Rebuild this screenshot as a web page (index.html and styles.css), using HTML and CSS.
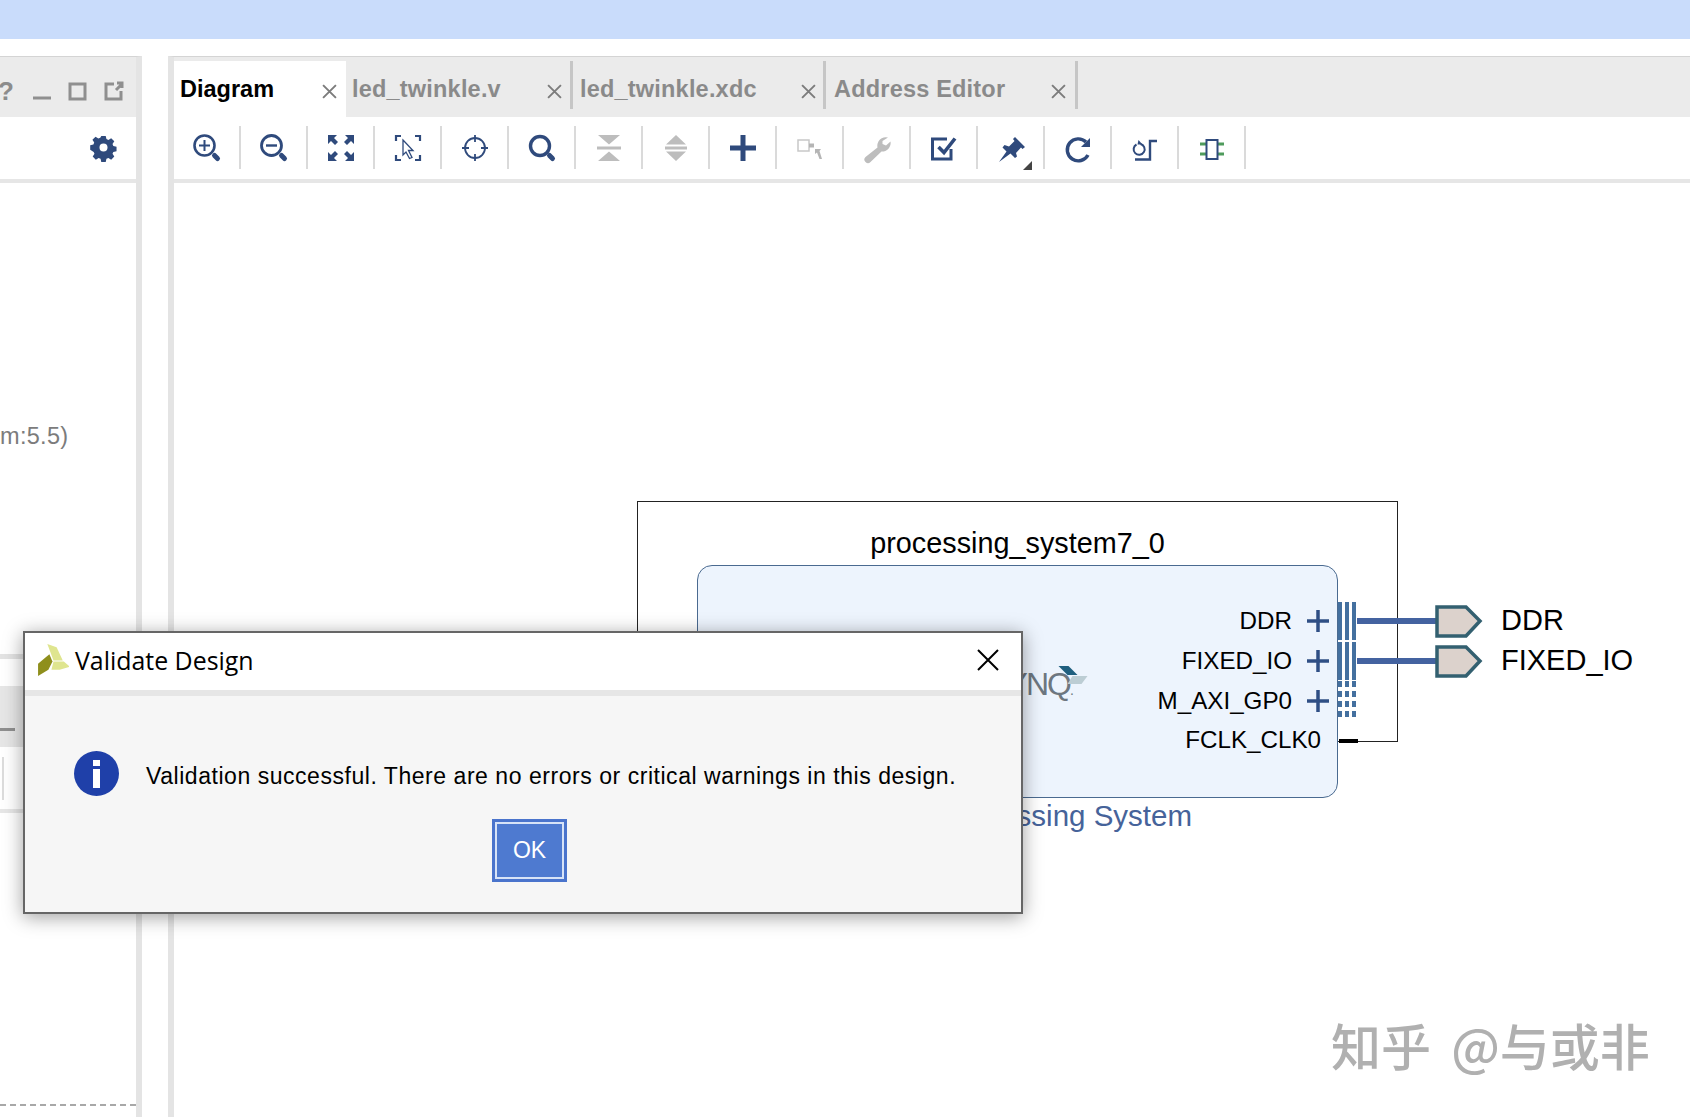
FILE: index.html
```html
<!DOCTYPE html>
<html lang="en">
<head>
<meta charset="utf-8">
<title>Validate Design</title>
<link rel="stylesheet" href="styles.css">
</head>
<body>
<div class="app">
  <div class="topbar"></div>
  <div class="workspace">
    <section class="left-pane">
      <div class="left-inner">
        <div class="left-tabs">
          <span class="help">?</span>
          <svg class="win-icon" viewBox="0 0 24 24"><path d="M3 19H21" class="grey-stroke"/></svg>
          <svg class="win-icon" viewBox="0 0 24 24"><rect x="4" y="5" width="15" height="15" class="grey-stroke"/></svg>
          <svg class="win-icon" viewBox="0 0 24 24"><path d="M12 5H4V20H19V12M14 11L20 5M15 4H20V9" class="grey-stroke"/></svg>
        </div>
        <div class="left-tools">
          <svg class="gear" viewBox="0 0 28 28"><path d="M11.5 1h5l.8 3.6 2.2.9 3.1-2 3.5 3.5-2 3.1.9 2.2 3.6.8v5l-3.6.8-.9 2.2 2 3.1-3.5 3.5-3.1-2-2.2.9-.8 3.6h-5l-.8-3.6-2.2-.9-3.1 2-3.5-3.5 2-3.1-.9-2.2L-.9 16.500v-5l3.600-.8.9-2.2-2-3.1 3.500-3.500 3.100 2 2.200-.9zM14 9.500a4.500 4.500 0 1 0 0 9 4.500 4.500 0 0 0 0-9z" fill-rule="evenodd" class="navy-fill"/></svg>
        </div>
        <div class="left-body">
          <p class="left-text">m:5.5)</p>
          <div class="left-rule"></div>
          <div class="left-band"><span class="left-dash"></span></div>
          <div class="left-sub"><span class="left-sub-sep"></span></div>
          <div class="left-grow"></div>
          <div class="left-dashed"></div>
        </div>
      </div>
    </section>

    <section class="main-pane">
      <div class="tabs">
        <div class="tab tab-active tab-diagram"><span>Diagram</span><svg class="tab-x" viewBox="0 0 14 14"><path d="M1 1L13 13M13 1L1 13"/></svg></div>
        <div class="tab tab-v"><span>led_twinkle.v</span><svg class="tab-x" viewBox="0 0 14 14"><path d="M1 1L13 13M13 1L1 13"/></svg></div>
        <i class="tab-sep"></i>
        <div class="tab tab-xdc"><span>led_twinkle.xdc</span><svg class="tab-x" viewBox="0 0 14 14"><path d="M1 1L13 13M13 1L1 13"/></svg></div>
        <i class="tab-sep"></i>
        <div class="tab tab-addr"><span>Address Editor</span><svg class="tab-x" viewBox="0 0 14 14"><path d="M1 1L13 13M13 1L1 13"/></svg></div>
        <i class="tab-sep"></i>
      </div>
      <div class="toolbar">
        <div class="tool"><svg viewBox="0 0 32 32"><circle cx="13.500" cy="13.500" r="10" class="nv" stroke-width="2.600"/><path d="M8 13.500H19M13.500 8V19" class="nv" stroke-width="2"/><path d="M23.500 23.500L26.500 26.500" class="nv" stroke-width="5" stroke-linecap="round"/></svg></div>
        <div class="tool"><svg viewBox="0 0 32 32"><circle cx="13.500" cy="13.500" r="10" class="nv" stroke-width="2.800"/><path d="M8 13.500H19" class="nv" stroke-width="2.400"/><path d="M23.500 23.500L26.500 26.500" class="nv" stroke-width="5" stroke-linecap="round"/></svg></div>
        <div class="tool"><svg viewBox="0 0 32 32"><path class="navy-fill" d="M3 3H12L9 6 13 10 10 13 6 9 3 12zM29 3V12L26 9 22 13 19 10 23 6 20 3zM3 29V20L6 23 10 19 13 22 9 26 12 29zM29 29H20L23 26 19 22 22 19 26 23 29 20z"/></svg></div>
        <div class="tool"><svg viewBox="0 0 32 32"><path class="nv" stroke-width="2.200" d="M4 9V4H9M23 4H28V9M4 23V28H9M23 28H28V23"/><path d="M11 8L21 18.500H16.500L20 25.500 17.500 26.500 14 20 11 23z" fill="#fff" stroke="#2f4a7c" stroke-width="1.300"/></svg></div>
        <div class="tool"><svg viewBox="0 0 32 32"><circle cx="16" cy="16" r="10" class="nv" stroke-width="1.800"/><path class="nv" stroke-width="1.800" d="M16 3V10M16 22V29M3 16H10M22 16H29"/></svg></div>
        <div class="tool"><svg viewBox="0 0 32 32"><circle cx="14" cy="14" r="9.500" class="nv" stroke-width="3.400"/><path d="M23.500 23.500L26.500 26.500" class="nv" stroke-width="5" stroke-linecap="round"/></svg></div>
        <div class="tool"><svg viewBox="0 0 32 32"><path class="off-fill" d="M5 3H27L16 12.500zM5 29H27L16 19.500zM4 14.500H28V17.500H4z"/></svg></div>
        <div class="tool"><svg viewBox="0 0 32 32"><path class="off-fill" d="M16 3L26 12.500H6zM16 29L26 19.500H6zM5 14.500H27V17.500H5z"/></svg></div>
        <div class="tool"><svg viewBox="0 0 32 32"><path class="navy-fill" d="M13.500 3H18.500V13.500H29V18.500H18.500V29H13.500V18.500H3V13.500H13.500z"/></svg></div>
        <div class="tool"><svg viewBox="0 0 32 32"><rect x="4" y="8" width="11" height="11" fill="none" stroke="#c8c8c8" stroke-width="1.500"/><rect x="15" y="11.500" width="5" height="4" fill="#b5b5b5"/><path d="M21 17H27L25.500 19 28 27H25.500L23 20.500 21 22z" fill="#b5b5b5"/></svg></div>
        <div class="tool"><svg viewBox="0 0 32 32"><path class="off-fill" d="M27 5.500A8.500 8.500 0 0 0 16.500 15.500L4.500 25A3.300 3.300 0 0 0 9.500 30L20.500 19.500A8.500 8.500 0 0 0 29.500 9.500L25 13.500 21.500 12 21.500 9z"/></svg></div>
        <div class="tool"><svg viewBox="0 0 32 32"><path class="nv" stroke-width="3" d="M19 7H4.500V27H23V17"/><path class="nv" stroke-width="3.600" d="M10.500 15L16 20.500 27 6.500"/></svg></div>
        <div class="tool"><svg viewBox="0 0 32 32"><path class="navy-fill" d="M20 5L30 15 27.500 17 26 15.500 21 21 22 24.500 20 26 15.500 21.500 4 30 11.500 19.500 7.500 15.500 9.500 13 14 14.500 19.500 9 18 7z"/></svg><span class="corner"></span></div>
        <div class="tool"><svg viewBox="0 0 32 32"><path class="nv" stroke-width="3.400" d="M26 23A11 11 0 1 1 24 10"/><path class="navy-fill" d="M28 6V15H19z"/></svg></div>
        <div class="tool"><svg viewBox="0 0 32 32"><path class="nv" stroke-width="2" d="M7.500 12.500A5.500 5.500 0 1 0 11.500 12"/><path class="navy-fill" d="M9.500 8L13.500 12.500H8.500z"/><path class="nv" stroke-width="2.400" d="M6 27.500H21V9H28"/></svg></div>
        <div class="tool"><svg viewBox="0 0 32 32"><path d="M4 12H28M4 22H28" fill="none" stroke="#4f9b5c" stroke-width="3"/><rect x="10.500" y="8" width="11" height="19" fill="#fff" stroke="#2f4a7c" stroke-width="2"/></svg></div>
      </div>
      <div class="rule"></div>

      <div class="canvas">
        <div class="outer-box"></div>
        <div class="ip-name">processing_system7_0</div>
        <div class="ip-block">
          <span class="zynq">ZYNQ<small class="zynq-tm">.</small></span>
          <svg class="zynq-mark" viewBox="0 0 30 20"><path d="M0 0H10L19 9H9z" fill="#1f5f7f"/><path d="M14 10H29L23 18H9z" fill="#bccdd4"/></svg>
          <span class="port port-ddr">DDR</span>
          <span class="port port-fixed">FIXED_IO</span>
          <span class="port port-axi">M_AXI_GP0</span>
          <span class="port port-clk">FCLK_CLK0</span>
        </div>
        <div class="ip-sub">ZYNQ7 Processing System</div>
        <svg class="wires" viewBox="0 0 160 160">
          <g class="plus"><path d="M7 19H29M18 8V30"/><path d="M7 59H29M18 48V70"/><path d="M7 99H29M18 88V110"/></g>
          <g class="bars">
            <path d="M40 0V38M47 0V38M54 0V38M40 40V78M47 40V78M54 40V78"/>
            <path class="bars-dot" d="M40 79V117M47 79V117M54 79V117"/>
          </g>
          <path class="bus" d="M57 19H137M57 59H137"/>
          <path class="clk" d="M39 139H58"/>
          <path class="pin" d="M137 5H166L180 19 166 34H137z M137 45H166L180 59 166 74H137z"/>
        </svg>
        <div class="ext ext-ddr">DDR</div>
        <div class="ext ext-fixed">FIXED_IO</div>
      </div>
      <div class="mark">知乎 @与或非</div>
    </section>
  </div>
</div>

<div class="dialog" role="dialog">
  <header class="dialog-head">
    <svg class="dialog-logo" viewBox="0 0 30 32"><path d="M9 1L18 4 24 17H15z" fill="#dfe58f"/><path d="M15 18H25L31 23 21 26H13z" fill="#dfe58f"/><path d="M0 20L11 11 14 18 10 26 0 32z" fill="#8f8f1c"/></svg>
    <span class="dialog-title">Validate Design</span>
    <svg class="dialog-x" viewBox="0 0 22 22"><path d="M1 1L21 21M21 1L1 21"/></svg>
  </header>
  <div class="dialog-body">
    <div class="dialog-msg">
      <svg class="info" viewBox="0 0 45 45"><circle cx="22.500" cy="22.500" r="22.500" fill="#1f40a9"/><rect x="19" y="9" width="7" height="6" fill="#fff"/><rect x="19" y="18" width="7" height="19" fill="#fff"/></svg>
      <span class="msg-text">Validation successful. There are no errors or critical warnings in this design.</span>
    </div>
    <button class="ok">OK</button>
  </div>
</div>
</body>
</html>
```
FILE: styles.css
```css
* { box-sizing: border-box; }
html, body { margin: 0; height: 100%; overflow: hidden; background: #fff; }
body { font-family: "Liberation Sans", Arial, sans-serif; color: #000; position: relative; }

.app { height: 1117px; display: flex; flex-direction: column; }
.topbar { height: 39px; background: #c9dcfb; flex: none; }
.workspace { flex: 1; display: flex; gap: 26px; padding-top: 17px; min-height: 0; }

/* left pane */
.left-pane { width: 142px; flex: none; border-top: 1px solid #d4d4d4; border-right: 6px solid #e4e4e4; }
.left-inner { height: 100%; display: flex; flex-direction: column; }
.left-tabs { height: 60px; background: #ebebeb; display: flex; align-items: center; padding-top: 8px; gap: 12px; overflow: hidden; justify-content: flex-end; padding-right: 10px; }
.help { font-size: 26px; font-weight: bold; color: #8c8c8c; margin-right: 4px; }
.win-icon { width: 24px; height: 24px; flex: none; }
.grey-stroke { fill: none; stroke: #8f8f8f; stroke-width: 3; }
.left-tools { height: 62px; display: flex; align-items: center; justify-content: flex-end; padding: 0 20px 2px 0; }
.gear { width: 25px; height: 25px; overflow: visible; }
.navy-fill { fill: #2f4a7c; }
.left-body { flex: 1; display: flex; flex-direction: column; border-top: 4px solid #e6e6e6; }
.left-text { margin: 240px 0 0; font-size: 23.500px; line-height: 26px; color: #7c7c7c; letter-spacing: .3px; }
.left-rule { height: 5px; background: #e3e3e3; margin-top: 205px; }
.left-band { height: 61px; margin-top: 27px; background: #e6e6e6; position: relative; }
.left-dash { position: absolute; left: 0; top: 42px; width: 15px; height: 3px; background: #8f8f8f; }
.left-sub { height: 66px; border-bottom: 4px solid #e6e6e6; padding-top: 10px; }
.left-sub-sep { display: block; margin-left: 2px; width: 2px; height: 43px; background: #dcdcdc; }
.left-grow { flex: 1; }
.left-dashed { height: 0; border-top: 2px dashed #a8a8a8; margin-bottom: 11px; }

/* main pane */
.main-pane { flex: 1; min-width: 0; border-top: 1px solid #d4d4d4; border-left: 6px solid #e4e4e4; position: relative; display: flex; flex-direction: column; }
.tabs { height: 60px; padding-top: 4px; background: #ebebeb; display: flex; flex: none; }
.tab { height: 56px; display: flex; justify-content: space-between; padding: 0 9px 0 6px; align-items: center; font-size: 23.500px; font-weight: bold; color: #8a8a8a; letter-spacing: .2px; }
.tab-active { background: #fff; color: #000; letter-spacing: 0; }
.tab-diagram { width: 172px; }
.tab-v { width: 224px; padding-right: 8px; }
.tab-xdc { width: 250px; padding-left: 7px; padding-right: 7px; }
.tab-addr { width: 249px; padding-left: 8px; }
.tab-x { width: 15px; height: 15px; margin-top: 5px; fill: none; stroke: #7c7c7c; stroke-width: 1.800; flex: none; }
.tab-sep { width: 3px; height: 48px; background: #c6c6c6; flex: none; }

.toolbar { height: 62px; padding-top: 9px; display: flex; align-items: flex-start; flex: none; background: #fff; }
.tool { width: 67px; height: 43px; border-right: 2px solid #dadada; display: flex; align-items: center; justify-content: center; position: relative; flex: none; }
.tool svg { width: 32px; height: 32px; }
.nv { fill: none; stroke: #2f4a7c; }
.off-fill { fill: #bdbdbd; }
.corner { position: absolute; right: 11px; bottom: -1px; width: 0; height: 0; border-left: 9px solid transparent; border-bottom: 9px solid #444; }
.rule { height: 4px; background: #e6e6e6; flex: none; }

/* diagram canvas */
.canvas { flex: 1; position: relative; }
.outer-box { position: absolute; left: 463px; top: 318px; width: 761px; height: 241px; border: 1px solid #222; }
.ip-name { position: absolute; left: 463px; top: 343px; width: 761px; text-align: center; font-size: 28.800px; line-height: 34px; }
.ip-block { position: absolute; left: 523px; top: 382px; width: 641px; height: 233px; background: #edf4fd; border: 1px solid #4a6a90; border-radius: 15px; }
.zynq { position: absolute; left: 291px; top: 99px; font-size: 32px; line-height: 38px; color: #6d7780; letter-spacing: -2px; }
.zynq-tm { font-size: 14px; }
.zynq-mark { position: absolute; left: 360px; top: 100px; width: 31px; height: 20px; }
.port { position: absolute; font-size: 24.200px; line-height: 30px; right: 45px; }
.port-ddr { top: 40px; }
.port-fixed { top: 80px; }
.port-axi { top: 120px; }
.port-clk { top: 159px; right: 16px; }
.ip-sub { position: absolute; left: 523px; top: 616px; width: 495px; direction: rtl; text-align: right; font-size: 29.500px; line-height: 34px; color: #46639a; white-space: nowrap; }
.wires { position: absolute; left: 1126px; top: 419px; width: 160px; height: 160px; overflow: visible; fill: none; }
.plus path { stroke: #2f4f85; stroke-width: 3.500; }
.bars path { stroke: #44709f; stroke-width: 4; }
.bars .bars-dot { stroke-dasharray: 6 4; }
.bus { stroke: #4463a0; stroke-width: 6; }
.clk { stroke: #000; stroke-width: 4; }
.pin { fill: #dcd2cc; stroke: #336070; stroke-width: 3.500; }
.ext { position: absolute; left: 1327px; font-size: 29px; line-height: 34px; }
.ext-ddr { top: 420px; }
.ext-fixed { top: 460px; }
.mark { position: absolute; left: 1157px; top: 957px; font-family: "Noto Sans CJK SC", sans-serif; font-size: 50px; line-height: 60px; font-weight: 500; color: #b0b0b0; white-space: nowrap; word-spacing: 9px; }

/* dialog */
.dialog { position: absolute; left: 23px; top: 631px; width: 1000px; height: 283px; border: 2px solid #666; background: #f6f6f6; box-shadow: 0 3px 18px rgba(0,0,0,.38); display: flex; flex-direction: column; }
.dialog-head { height: 63px; flex: none; background: #fff; border-bottom: 6px solid #e6e6e6; display: flex; align-items: center; padding: 0 22px 4px 13px; }
.dialog-logo { width: 31px; height: 33px; flex: none; margin-right: 6px; }
.dialog-title { font-family: "Open Sans", sans-serif; font-size: 24.900px; flex: 1; }
.dialog-x { width: 22px; height: 22px; fill: none; stroke: #000; stroke-width: 2; }
.dialog-body { flex: 1; display: flex; flex-direction: column; align-items: center; }
.dialog-msg { align-self: stretch; display: flex; align-items: center; padding: 55px 0 0 49px; gap: 27px; }
.info { width: 45px; height: 45px; flex: none; }
.msg-text { font-size: 23px; letter-spacing: .54px; white-space: nowrap; padding-top: 5px; }
.ok { margin-top: 23px; margin-left: 13px; width: 75px; height: 63px; background: #4e7ad0; border: 3px solid #4a74cc; outline: 2px solid #d7e3f7; outline-offset: -5px; color: #fff; font-family: "Liberation Sans", sans-serif; font-size: 23px; padding: 0; }
```
